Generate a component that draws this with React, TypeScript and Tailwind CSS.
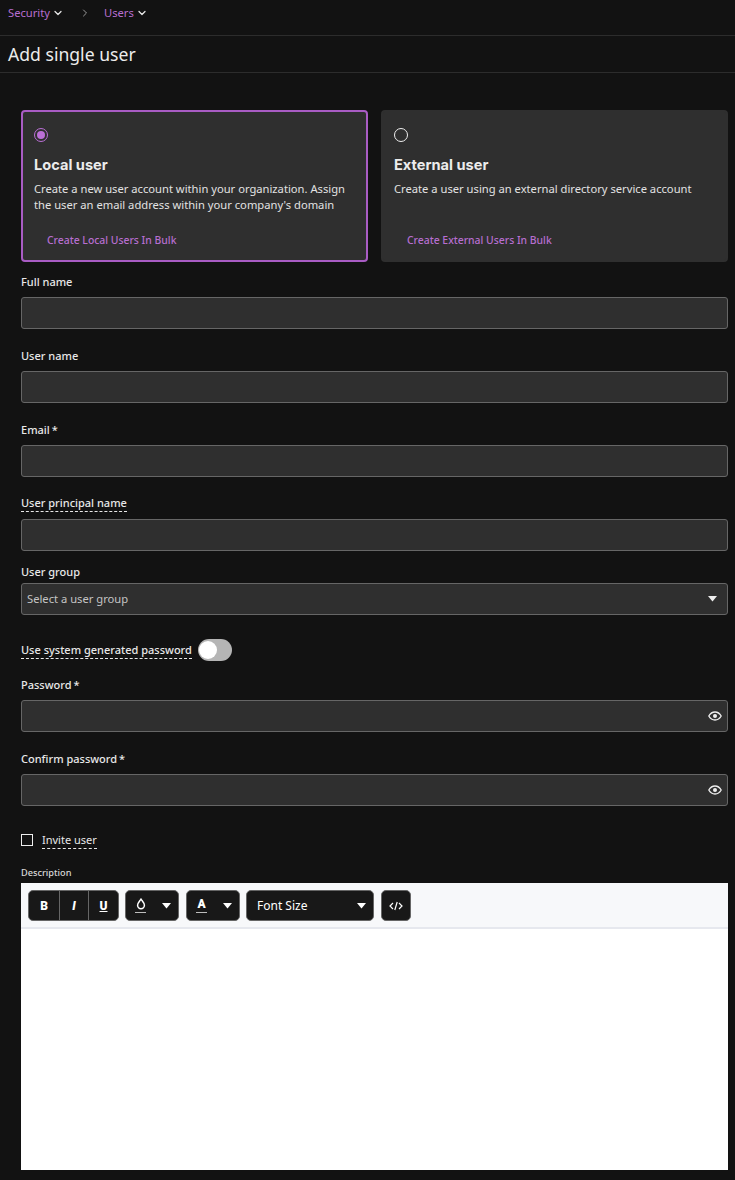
import { ChevronDown, ChevronRight } from "lucide-react";

const noto = "font-['Noto_Sans',sans-serif]";

function Caret({ className = "" }: { className?: string }) {
  return (
    <svg width="9" height="6" viewBox="0 0 9 6" className={className}>
      <path d="M0 0h9L4.5 5.5z" fill="currentColor" />
    </svg>
  );
}

function EyeIcon() {
  return (
    <svg width="14" height="10" viewBox="0 0 14 10" className="text-[#eee]">
      <path d="M.8 5C2.300 2.400 4.500 1 7 1s4.700 1.400 6.200 4C11.700 7.600 9.500 9 7 9S2.300 7.600.8 5z" fill="none" stroke="currentColor" strokeWidth="1.300" />
      <circle cx="7" cy="5" r="2" fill="currentColor" />
    </svg>
  );
}

function FieldLabel({ text, required, dashed }: { text: string; required?: boolean; dashed?: boolean }) {
  return (
    <div className="flex h-[15px] items-center">
      <span className={`text-[11px] font-medium leading-[15px] text-[#e8e8e8] ${dashed ? "border-b border-dashed border-[#e8e8e8] pb-px" : ""}`}>
        {text}
        {required && <span className="ml-[2px]">*</span>}
      </span>
    </div>
  );
}

function TextField({ label, required, dashed, password }: { label: string; required?: boolean; dashed?: boolean; password?: boolean }) {
  return (
    <div className="flex flex-col gap-2">
      <FieldLabel text={label} required={required} dashed={dashed} />
      <div className="flex h-8 items-center justify-end rounded-[3px] border border-[#666] bg-[#2f2f2f] pr-[5px]">
        {password && <EyeIcon />}
      </div>
    </div>
  );
}

function UserTypeCard({ title, body, link, selected }: { title: string; body: string; link: string; selected?: boolean }) {
  return (
    <div className={`h-[152px] rounded-[4px] bg-[#2f2f2f] pl-[11px] pr-2 pt-4 ${selected ? "border-2 border-[#a95cc4]" : "border-2 border-[#2f2f2f]"}`}>
      {selected ? (
        <div className="flex h-[14px] w-[14px] items-center justify-center rounded-full border-[1.5px] border-[#bb6fd6]">
          <div className="h-2 w-2 rounded-full bg-[#bb6fd6]" />
        </div>
      ) : (
        <div className="h-[14px] w-[14px] rounded-full border-[1.5px] border-[#eee]" />
      )}
      <h3 className="mt-[14px] font-['Inter',sans-serif] text-[14.6px] font-bold leading-[18px] text-[#ececec]">{title}</h3>
      <p className="mt-[7px] h-[32px] text-[11.2px] leading-4 text-[#e2e2e2]">{body}</p>
      <div className="mt-[19px] pl-[13px] text-[10.4px] font-medium leading-4 text-[#b76ed0]">{link}</div>
    </div>
  );
}

function ToolButton({ children, className = "" }: { children: React.ReactNode; className?: string }) {
  return (
    <div className={`flex h-[31px] items-center rounded-[5px] border border-[#666] bg-[#181818] text-white ${className}`}>
      {children}
    </div>
  );
}

export default function App() {
  return (
    <div className={`${noto} h-[1180px] w-[735px] overflow-hidden bg-[#121212]`}>
      <nav className="flex h-9 items-start border-b border-[#2c2c2c] pl-2 pt-[5px] text-[11.2px] leading-4 text-[#b76ed0]">
        <span>Security</span>
        <ChevronDown size={12} strokeWidth={2.5} className="ml-[2px] mt-[2px] text-[#e8e8e8]" />
        <ChevronRight size={12} className="ml-[15px] mt-[2px] text-[#999]" />
        <span className="ml-[13px]">Users</span>
        <ChevronDown size={12} strokeWidth={2.5} className="ml-[2px] mt-[2px] text-[#e8e8e8]" />
      </nav>
      <header className="flex h-[37px] items-center border-b border-[#2c2c2c] pl-2">
        <h1 className="text-[17.6px] leading-6 text-[#ececec]">Add single user</h1>
      </header>

      <main className="pl-[21px] pr-[7px] pt-[37px]">
        <div className="grid grid-cols-2 gap-[13px]">
          <UserTypeCard
            selected
            title="Local user"
            body="Create a new user account within your organization. Assign the user an email address within your company's domain"
            link="Create Local Users In Bulk"
          />
          <UserTypeCard
            title="External user"
            body="Create a user using an external directory service account"
            link="Create External Users In Bulk"
          />
        </div>

        <div className="mt-[12px] flex flex-col gap-[19px]">
          <TextField label="Full name" />
          <TextField label="User name" />
          <TextField label="Email" required />
          <TextField label="User principal name" dashed />
          <div className="-mt-[6px] flex flex-col gap-[4px]">
            <FieldLabel text="User group" />
            <div className="flex h-8 items-center justify-between rounded-[3px] border border-[#666] bg-[#2f2f2f] pl-[5px] pr-[10px]">
              <span className="text-[11.2px] text-[#c4c4c4]">Select a user group</span>
              <Caret className="text-[#eee]" />
            </div>
          </div>
        </div>

        <div className="mt-[24px] flex h-[22px] items-center gap-[6px]">
          <span className="border-b border-dashed border-[#e8e8e8] pb-px text-[11px] font-medium leading-[15px] text-[#e8e8e8]">Use system generated password</span>
          <div className="flex h-[22px] w-[34px] items-center rounded-full bg-[#b5b5b5] pl-[1px]">
            <div className="h-[18px] w-[18px] rounded-full bg-white" />
          </div>
        </div>

        <div className="mt-4 flex flex-col gap-[19px]">
          <TextField label="Password" required password />
          <TextField label="Confirm password" required password />
        </div>

        <label className="mt-[26px] flex h-[16px] items-center gap-[9px]">
          <span className="h-3 w-3 border-[1.5px] border-[#eee]" />
          <span className="border-b border-dashed border-[#e8e8e8] pb-px text-[11px] leading-[15px] text-[#e8e8e8]">Invite user</span>
        </label>

        <div className="mt-[17px] h-4 text-[9.2px] font-medium leading-4 text-[#d8d8d8]">Description</div>

        <div className="mt-[2px] h-[287px] bg-white">
          <div className="flex h-[46px] items-start gap-[6px] border-b-2 border-[#e6e8ee] bg-[#f7f8fa] pl-[7px] pt-[7px]">
            <ToolButton className="w-[91px]">
              <span className="flex h-full w-[30px] items-center justify-center font-['Roboto',sans-serif] text-xs font-black">B</span>
              <span className="flex h-full w-[30px] items-center justify-center border-x border-[#666] font-['Roboto',sans-serif] text-xs font-black italic">I</span>
              <span className="flex h-full w-[29px] items-center justify-center font-['Roboto',sans-serif] text-xs font-black underline">U</span>
            </ToolButton>
            <ToolButton className="w-[54px] justify-between pl-[9px] pr-[7px]">
              <span className="flex flex-col items-center">
                <svg width="10" height="12" viewBox="0 0 10 12" fill="none" stroke="currentColor" strokeWidth="1.5">
                  <path d="M5 1.2C3.6 3.3 1.6 5 1.6 7.3a3.4 3.4 0 0 0 6.8 0C8.400 5 6.400 3.300 5 1.200z" />
                </svg>
                <span className="mt-[2px] h-[1.5px] w-[11px] bg-[#bdbdbd]" />
              </span>
              <Caret />
            </ToolButton>
            <ToolButton className="ml-px w-[54px] justify-between pl-[9px] pr-[7px]">
              <span className="flex flex-col items-center">
                <span className="font-['Roboto',sans-serif] text-xs font-black leading-[13px]">A</span>
                <span className="mt-[1px] h-[1.5px] w-[11px] bg-[#bdbdbd]" />
              </span>
              <Caret />
            </ToolButton>
            <ToolButton className="w-[128px] justify-between pl-[10px] pr-[7px]">
              <span className="font-['Noto_Sans',sans-serif] text-xs">Font Size</span>
              <Caret />
            </ToolButton>
            <ToolButton className="ml-px w-[30px] justify-center">
              <svg width="14" height="10" viewBox="0 0 14 10" fill="none" stroke="currentColor" strokeWidth="1.2">
                <path d="M4 2 1 5l3 3M10 2l3 3-3 3M8.200 1 5.800 9" />
              </svg>
            </ToolButton>
          </div>
        </div>
      </main>
    </div>
  );
}
